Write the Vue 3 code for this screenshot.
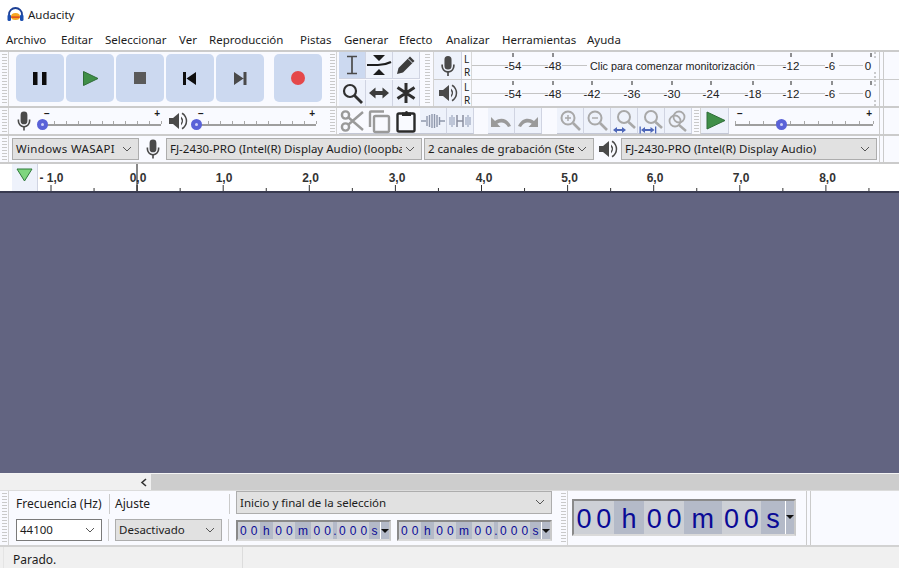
<script setup>
const menus = [
  { label: 'Archivo', w: 55 },
  { label: 'Editar', w: 44 },
  { label: 'Seleccionar', w: 74 },
  { label: 'Ver', w: 30 },
  { label: 'Reproducción', w: 91 },
  { label: 'Pistas', w: 44 },
  { label: 'Generar', w: 55 },
  { label: 'Efecto', w: 47 },
  { label: 'Analizar', w: 56 },
  { label: 'Herramientas', w: 85 },
  { label: 'Ayuda', w: 50 }
]

const mic = 'M10 2a3.4 3.4 0 0 1 3.4 3.4v6a3.4 3.4 0 0 1-6.8 0v-6A3.4 3.4 0 0 1 10 2zM3.6 10h1.6v1.6a4.8 4.8 0 0 0 9.6 0V10h1.6v1.6a6.4 6.4 0 0 1-5.6 6.3V21H9.2v-3.100A6.400 6.400 0 0 1 3.600 11.600z'
const speaker = 'M2 8h4l6-5v16l-6-5H2zM14 6.500a6 6 0 0 1 0 9v-2.400a3.600 3.600 0 0 0 0-4.200zM15.500 2.500a10 10 0 0 1 0 17l-.9-1.500a8 8 0 0 0 0-14z'

const meterTop = [
  { x: 41, t: '-54' }, { x: 81, t: '-48' }, { x: 319, t: '-12' }, { x: 358, tick: 360, t: '-6' }, { x: 396, tick: 399, t: '0' }
]
const meterBottom = [
  { x: 41, t: '-54' }, { x: 81, t: '-48' }, { x: 120, t: '-42' }, { x: 160, t: '-36' }, { x: 200, t: '-30' },
  { x: 239, t: '-24' }, { x: 281, t: '-18' }, { x: 319, t: '-12' }, { x: 358, tick: 360, t: '-6' }, { x: 396, tick: 399, t: '0' }
]

const rulerLabels = [
  { x: 13.500, t: '- 1,0' }, { x: 100, t: '0,0' }, { x: 186, t: '1,0' }, { x: 272.500, t: '2,0' },
  { x: 359, t: '3,0' }, { x: 446, t: '4,0' }, { x: 531.500, t: '5,0' }, { x: 617, t: '6,0' },
  { x: 703, t: '7,0' }, { x: 789.500, t: '8,0' }
]
const rulerTicks = Array.from({ length: 20 }, (_, i) => ({ x: 13 + i * 43.050, major: i % 2 === 0 }))

const sliderTicks = [0, 1, 2, 3, 4, 5, 6, 7, 8, 9, 10]

function clock(sizes) {
  const pair = (shade) => ['0', '0'].map((t) => ({ t, w: sizes.digit, shade }))
  return [
    ...pair(false),
    { t: 'h', w: sizes.h, shade: true },
    ...pair(false),
    { t: 'm', w: sizes.m, shade: true },
    ...pair(false)
  ]
}

const smallClock = [
  ...clock({ digit: 11, h: 14, m: 17 }),
  { t: '.', w: 4, shade: true },
  { t: '0', w: 11, shade: false },
  { t: '0', w: 11, shade: false },
  { t: '0', w: 11, shade: false },
  { t: 's', w: 11, shade: true }
]
const bigClock = [
  ...clock({ digit: 20, h: 31, m: 38 }),
  { t: 's', w: 24, shade: true }
]
</script>

<template>
  <div class="app">
    <header class="titlebar">
      <svg class="logo" width="17" height="15" viewBox="0 0 17 15">
        <path d="M2 9V7.500a6.500 6.500 0 0 1 13 0V9" fill="none" stroke="#1c3f94" stroke-width="1.800" />
        <rect x="0.500" y="7.500" width="3.500" height="6.500" rx="1.500" fill="#1c4fb0" />
        <rect x="13" y="7.500" width="3.500" height="6.500" rx="1.500" fill="#1c4fb0" />
        <ellipse cx="8.500" cy="9.500" rx="4.500" ry="3.600" fill="#f5a623" />
        <path d="M4.200 9.500h8.600v1.200H4.200z" fill="#d8321e" />
      </svg>
      <span>Audacity</span>
    </header>

    <nav class="menubar">
      <span v-for="m in menus" :key="m.label" :style="{ width: m.w + 'px' }">{{ m.label }}</span>
    </nav>

    <div class="dock-row row-a">
      <div class="grip"></div>
      <div class="transport">
        <button class="tp first">
          <svg width="48" height="48"><path d="M17 18h4.500v13H17zM26 18h4.500v13H26z" fill="#0c0c0c" /></svg>
        </button>
        <button class="tp">
          <svg width="48" height="48"><path d="M17.500 17.500 32 24.500 17.500 31.500z" fill="#3f8f48" stroke="#2f6d38" /></svg>
        </button>
        <button class="tp">
          <svg width="48" height="48"><rect x="18" y="18" width="12" height="12" fill="#5a5a5a" /></svg>
        </button>
        <button class="tp">
          <svg width="48" height="48"><path d="M17 18h3v13h-3zM30 18v13l-9.500-6.500z" fill="#0e0e0e" /></svg>
        </button>
        <button class="tp">
          <svg width="48" height="48"><path d="M18 18v13l9.500-6.500zM27.500 18h3v13h-3z" fill="#4a4a4a" /></svg>
        </button>
        <button class="tp record">
          <svg width="48" height="48"><circle cx="24" cy="24" r="7" fill="#e5484a" /></svg>
        </button>
      </div>
      <div class="grip"></div>
      <div class="tools">
        <button class="tool active">
          <svg width="26" height="26"><path d="M8 4.500h10M13 4.500v17M8 21.500h10" fill="none" stroke="#4a4a4a" stroke-width="1.700" /></svg>
        </button>
        <button class="tool">
          <svg width="26" height="26"><path d="M7 3h12l-6 6zM7 23h12l-6-6z" fill="#1d1d1d" /><path d="M1 13h11c5 0 9-1 13-3" fill="none" stroke="#1d1d1d" stroke-width="2.200" /></svg>
        </button>
        <button class="tool">
          <svg width="26" height="26"><path d="M4 22l1.500-6L17 4.500l4.500 4.500L10 20.500z" fill="#3c3c3c" /><path d="M15 6.500l4.500 4.500" stroke="#e9eefa" /></svg>
        </button>
        <button class="tool">
          <svg width="26" height="26"><circle cx="11" cy="11" r="6" fill="none" stroke="#303030" stroke-width="2.200" /><path d="M15.500 15.500 23 23" stroke="#303030" stroke-width="2.800" /></svg>
        </button>
        <button class="tool">
          <svg width="26" height="26"><path d="M3 13l6.500-5.500v3.500h7V7.500L23 13l-6.500 5.500V15h-7v3.500z" fill="#3c3c3c" /></svg>
        </button>
        <button class="tool">
          <svg width="26" height="26"><path d="M13 3v20M4.500 7.500l17 11M21.500 7.500l-17 11" stroke="#2e2e2e" stroke-width="3" /></svg>
        </button>
      </div>
      <div class="grip narrow"></div>
      <div class="meters">
        <div class="meter-line">
          <button class="meter-btn">
            <svg width="22" height="24" viewBox="0 0 20 23"><path :d="mic" fill="#4a4a4a" /></svg>
          </button>
          <div class="lr"><span>L</span><span>R</span></div>
          <svg class="scale" width="404" height="27">
            <line x1="0" y1="13.500" x2="404" y2="13.500" stroke="#c4c4c4" />
            <line x1="403" y1="0" x2="403" y2="27" stroke="#9a9a9a" stroke-dasharray="2 2" />
            <g v-for="m in meterTop" :key="m.t">
              <line :x1="m.tick ?? m.x" y1="1" :x2="m.tick ?? m.x" y2="5" stroke="#222" />
              <rect :x="m.x - 5" y="7" width="14" height="13" fill="#f9faff" />
              <text :x="m.x" y="17.500" text-anchor="middle">{{ m.t }}</text>
            </g>
            <rect x="115" y="6" width="170" height="15" fill="#f9faff" />
            <text class="hint" x="118" y="17.500">Clic para comenzar monitorización</text>
          </svg>
          <div class="dock-end"></div>
        </div>
        <div class="meter-line">
          <button class="meter-btn">
            <svg width="22" height="24" viewBox="0 0 22 22"><path :d="speaker" fill="#4a4a4a" /></svg>
          </button>
          <div class="lr"><span>L</span><span>R</span></div>
          <svg class="scale" width="404" height="26">
            <line x1="0" y1="13.500" x2="404" y2="13.500" stroke="#c4c4c4" />
            <line x1="403" y1="0" x2="403" y2="26" stroke="#9a9a9a" stroke-dasharray="2 2" />
            <g v-for="m in meterBottom" :key="m.t">
              <line :x1="m.tick ?? m.x" y1="1" :x2="m.tick ?? m.x" y2="5" stroke="#222" />
              <rect :x="m.x - 5" y="7" width="14" height="13" fill="#f9faff" />
              <text :x="m.x" y="17.500" text-anchor="middle">{{ m.t }}</text>
            </g>
          </svg>
          <div class="dock-end"></div>
        </div>
      </div>
    </div>

    <div class="dock-row row-b">
      <div class="grip"></div>
      <div class="mixer">
        <svg class="mix-icon" width="20" height="24" viewBox="0 0 20 23"><path :d="mic" fill="#4a4a4a" /></svg>
        <div class="slider mic-slider">
          <span class="minus">−</span><span class="plus">+</span>
          <i v-for="t in sliderTicks" :key="t" class="tick" :style="{ left: t * 10 + '%' }"></i>
          <b class="thumb" style="left: 0%"></b>
        </div>
        <svg class="mix-icon spk" width="22" height="24" viewBox="0 0 22 22"><path :d="speaker" fill="#4a4a4a" /></svg>
        <div class="slider spk-slider">
          <span class="minus">−</span><span class="plus">+</span>
          <i v-for="t in sliderTicks" :key="t" class="tick" :style="{ left: t * 10 + '%' }"></i>
          <b class="thumb" style="left: 0%"></b>
        </div>
      </div>
      <div class="grip"></div>
      <div class="edit">
        <button class="ed plain">
          <svg width="26" height="26"><g fill="none" stroke="#9a9a9a" stroke-width="2.400"><circle cx="6.500" cy="7" r="3.600" /><circle cx="6.500" cy="19" r="3.600" /><path d="M9.500 9.500 24 22M9.500 16.500 24 4" /></g></svg>
        </button>
        <button class="ed plain">
          <svg width="26" height="26"><g fill="none" stroke="#9a9a9a" stroke-width="2.400"><path d="M4 19V4.500a1 1 0 0 1 1-1h13" /><rect x="8" y="8" width="15" height="16" rx="1.500" /></g></svg>
        </button>
        <button class="ed plain">
          <svg width="26" height="26"><g fill="none" stroke="#2a2a2a" stroke-width="2.400"><rect x="4.500" y="5.500" width="17" height="18" rx="1.500" /></g><path d="M9 8V4.500h3a1.500 1.500 0 0 1 3 0h3V8z" fill="#2a2a2a" /></svg>
        </button>
        <button class="ed">
          <svg width="26" height="26"><g fill="none" stroke="#8f98ac" stroke-width="1.400"><path d="M1 13h5M20 13h5" /><path d="M7 8v10M9.500 7v12M12 6v14M14.500 6v14M17 7v12M19.500 9v8" /></g></svg>
        </button>
        <button class="ed">
          <svg width="26" height="26"><g fill="none" stroke="#a4adc4" stroke-width="1.300"><path d="M3 9v8M5 7v12M7 9v8M19 9v8M21 7v12M23 9v8" /></g><path d="M10 7v12M16 7v12M10 13h6" fill="none" stroke="#8a8fa0" stroke-width="1.500" /></svg>
        </button>
        <div class="ed-space s41"></div>
        <button class="ed">
          <svg width="26" height="26"><path d="M3 9v10h9.500l-3.200-3.200c3.600-2.300 8-1.300 10.700 3.200l3-.9C19.800 10.800 13 8.700 7 13z" fill="#9a9a9a" /></svg>
        </button>
        <button class="ed">
          <svg width="26" height="26"><path d="M23 9v10h-9.500l3.200-3.200c-3.600-2.300-8-1.300-10.700 3.200l-3-.9C6.200 10.800 13 8.700 19 13z" fill="#9a9a9a" /></svg>
        </button>
        <div class="ed-space s16"></div>
        <button class="ed">
          <svg width="26" height="26"><g fill="none" stroke="#a8a8a8" stroke-width="2"><circle cx="11" cy="10" r="6.500" /><path d="M16 15 23 22" stroke-width="2.600" /><path d="M8 10h6M11 7v6" stroke-width="1.400" /></g></svg>
        </button>
        <button class="ed">
          <svg width="26" height="26"><g fill="none" stroke="#a8a8a8" stroke-width="2"><circle cx="11" cy="10" r="6.500" /><path d="M16 15 23 22" stroke-width="2.600" /><path d="M8 10h6" stroke-width="1.400" /></g></svg>
        </button>
        <button class="ed">
          <svg width="26" height="26"><g fill="none" stroke="#a8a8a8" stroke-width="2"><circle cx="13" cy="9" r="6" /><path d="M17.500 14 24 20" stroke-width="2.600" /></g><path d="M2 22l4-3v2h5v-2l4 3-4 3v-2H6v2z" fill="#4d66b8" /></svg>
        </button>
        <button class="ed">
          <svg width="26" height="26"><g fill="none" stroke="#a8a8a8" stroke-width="2"><circle cx="13" cy="9" r="6" /><path d="M17.500 14 24 20" stroke-width="2.600" /></g><path d="M1.500 18.500h1.300v7H1.500zM17 18.500h1.300v7H17zM3 22l4-3v2h5.500v-2l4 3-4 3v-2H7v2z" fill="#4d66b8" /></svg>
        </button>
        <button class="ed">
          <svg width="26" height="26"><g fill="none" stroke="#a8a8a8" stroke-width="1.800"><circle cx="14" cy="9" r="5.500" /><circle cx="10" cy="13" r="5.500" /><path d="M14 17 21 23" stroke-width="2.400" /></g></svg>
        </button>
      </div>
      <div class="grip"></div>
      <button class="play-at">
        <svg width="28" height="25"><path d="M6 4l18 8.500L6 21z" fill="#3f8f48" stroke="#2f6d38" /></svg>
      </button>
      <div class="slider speed-slider">
        <span class="minus">−</span><span class="plus">+</span>
        <i v-for="t in sliderTicks" :key="t" class="tick" :style="{ left: t * 10 + '%' }"></i>
        <b class="thumb" style="left: 33%"></b>
      </div>
      <div class="dock-end"></div>
    </div>

    <div class="dock-row row-c">
      <div class="grip"></div>
      <div class="combo c-host">Windows WASAPI
        <svg class="chev" width="10" height="6"><path d="M1 1l4 4 4-4" fill="none" stroke="#555" /></svg>
      </div>
      <svg class="dev-icon" width="20" height="24" viewBox="0 0 20 23"><path :d="mic" fill="#4a4a4a" /></svg>
      <div class="combo c-rec">FJ-2430-PRO (Intel(R) Display Audio) (loopba
        <svg class="chev" width="10" height="6"><path d="M1 1l4 4 4-4" fill="none" stroke="#555" /></svg>
      </div>
      <div class="combo c-chan">2 canales de grabación (Ster
        <svg class="chev" width="10" height="6"><path d="M1 1l4 4 4-4" fill="none" stroke="#555" /></svg>
      </div>
      <svg class="dev-icon spk" width="22" height="24" viewBox="0 0 22 22"><path :d="speaker" fill="#4a4a4a" /></svg>
      <div class="combo c-play">FJ-2430-PRO (Intel(R) Display Audio)
        <svg class="chev" width="10" height="6"><path d="M1 1l4 4 4-4" fill="none" stroke="#555" /></svg>
      </div>
      <div class="dock-end"></div>
    </div>

    <div class="ruler">
      <div class="ruler-side">
        <div class="pin">
          <svg width="17" height="14"><path d="M1 1h15l-7.500 12z" fill="#7ed67e" stroke="#2f7a3a" /></svg>
        </div>
      </div>
      <svg class="ruler-scale" width="861" height="27">
        <line v-for="(t, i) in rulerTicks" :key="i" :x1="t.x" :x2="t.x" :y1="t.major ? 21 : 24" y2="27" stroke="#333" />
        <text v-for="l in rulerLabels" :key="l.t" :x="l.x" y="18" text-anchor="middle">{{ l.t }}</text>
        <line x1="99" x2="99" y1="0" y2="27" stroke="#111" />
      </svg>
    </div>

    <main class="tracks"></main>

    <div class="hscroll">
      <div class="scroll-btn">
        <svg width="8" height="9"><path d="M6 1 2 4.500 6 8" fill="none" stroke="#333" stroke-width="1.600" /></svg>
      </div>
      <div class="scroll-track"></div>
    </div>

    <div class="bottom">
      <div class="grip"></div>
      <div class="selbar">
        <label class="rate-label">Frecuencia (Hz)</label>
        <label class="snap-label">Ajuste</label>
        <div class="combo sel-mode">Inicio y final de la selección
          <svg class="chev" width="10" height="6"><path d="M1 1l4 4 4-4" fill="none" stroke="#555" /></svg>
        </div>
        <div class="rate-cell">
          <div class="combo rate">44100
            <svg class="chev" width="10" height="6"><path d="M1 1l4 4 4-4" fill="none" stroke="#555" /></svg>
          </div>
        </div>
        <div class="snap-cell">
          <div class="combo snap">Desactivado
            <svg class="chev" width="10" height="6"><path d="M1 1l4 4 4-4" fill="none" stroke="#555" /></svg>
          </div>
        </div>
        <div class="clocks">
          <div v-for="n in 2" :key="n" class="clock small">
            <span v-for="(c, i) in smallClock" :key="i" :class="{ shade: c.shade }" :style="{ width: c.w + 'px' }">{{ c.t }}</span>
            <em class="clock-arrow"></em>
          </div>
        </div>
      </div>
      <div class="grip"></div>
      <div class="big-wrap">
        <div class="clock big">
          <span v-for="(c, i) in bigClock" :key="i" :class="{ shade: c.shade }" :style="{ width: c.w + 'px' }">{{ c.t }}</span>
          <em class="clock-arrow"></em>
        </div>
      </div>
      <div class="dock-end bottom-end"></div>
    </div>

    <footer class="status">
      <span class="status-main">Parado.</span>
      <span class="status-rest"></span>
    </footer>
  </div>
</template>

<style>
html, body {
  margin: 0;
  background: #fff;
}
</style>

<style scoped>
.app {
  width: 899px;
  height: 568px;
  overflow: hidden;
  display: flex;
  flex-direction: column;
  font-family: "Noto Sans", "Open Sans", sans-serif;
  font-size: 11.500px;
  color: #1c1c1c;
}

button {
  padding: 0;
  border: none;
  font: inherit;
  display: block;
}

svg {
  display: block;
}

.titlebar {
  height: 30px;
  display: flex;
  align-items: center;
  gap: 4px;
  padding: 0 0 1px 7px;
  box-sizing: border-box;
  font-size: 11.500px;
  background: #fff;
}

.menubar {
  height: 20px;
  display: flex;
  align-items: center;
  padding: 0 0 2px 6px;
  box-sizing: border-box;
  background: #fff;
}

.menubar span {
  white-space: nowrap;
}

.dock-row {
  display: flex;
  background: #f9faff;
  border-top: 2px solid #cbcbcb;
  box-sizing: border-box;
}

.row-a { height: 56px; }
.row-b { height: 28px; }
.row-c { height: 28px; align-items: center; }

.row-c .grip {
  align-self: stretch;
}

.grip {
  width: 5px;
  flex: none;
  margin: 2px;
  background: repeating-linear-gradient(to bottom, #c9c9c9 0 1px, #f9faff 1px 3px);
  position: relative;
}

.grip::after {
  content: "";
  position: absolute;
  top: -2px;
  bottom: -2px;
  right: -2px;
  width: 1px;
  background: #d4d4d4;
}

.grip.narrow {
  margin-left: 5px;
  margin-right: 4px;
}

.grip.narrow::after {
  right: -4px;
}

.transport {
  width: 319px;
  flex: none;
  display: flex;
  gap: 2px;
  padding: 2px 0 0 7px;
  box-sizing: border-box;
}

.tp {
  width: 48px;
  height: 48px;
  background: #ccd9f0;
  border-radius: 5px;
}

.tp.record {
  margin-left: 8px;
}

.tools {
  display: grid;
  grid-template-columns: repeat(3, 27px);
  grid-auto-rows: 27px;
  width: 81px;
  flex: none;
  padding-left: 2px;
  row-gap: 1px;
}

.tool {
  width: 26px;
  height: 26px;
  background: #eef2fb;
  border-right: 1px solid #d0d4e2;
  border-bottom: 1px solid #d0d4e2;
  box-sizing: content-box;
}

.tool.active {
  background: #ccd9f0;
}

.meters {
  flex: 1;
  display: flex;
  flex-direction: column;
}

.meter-line {
  height: 27px;
  display: flex;
  align-items: stretch;
}

.meter-line + .meter-line {
  height: 27px;
  border-top: 1px solid #cbcbcb;
}

.meter-btn {
  width: 28px;
  flex: none;
  background: #eef2fb;
  border-right: 1px solid #d0d4e2;
  display: flex;
  align-items: center;
  justify-content: center;
}

.lr {
  width: 10px;
  flex: none;
  display: flex;
  flex-direction: column;
  justify-content: space-around;
  font-size: 10px;
  line-height: 12px;
  padding-left: 2px;
  box-sizing: border-box;
  border-right: 1px solid #d8d8d8;
}

.scale {
  flex: none;
  overflow: hidden;
}

.scale text {
  font-family: "Liberation Sans", Arial, sans-serif;
  font-size: 11.600px;
  fill: #222;
}

.scale text.hint {
  font-size: 10.750px;
}

.dock-end {
  flex: 1;
  margin-left: 3px;
  align-self: stretch;
  border-left: 1px solid #cbcbcb;
  background: linear-gradient(#cbcbcb, #cbcbcb) 3px 0 / 1px 100% no-repeat;
}

.row-b .dock-end { margin-left: 6px; }
.row-c .dock-end { margin-left: 2px; }

.mixer {
  width: 319px;
  flex: none;
  display: flex;
  align-items: center;
  padding-left: 5px;
  box-sizing: border-box;
}

.mix-icon {
  flex: none;
}

.mix-icon.spk {
  margin-left: 6px;
}

.slider {
  position: relative;
  height: 26px;
  flex: none;
  background: linear-gradient(#9e9e9e, #9e9e9e) left 0 top 16px / 100% 2px no-repeat;
}

.mic-slider { width: 119px; margin-left: 8px; }
.spk-slider { width: 120px; margin-left: 7px; }
.speed-slider { width: 138px; margin-left: 6px; }

.minus, .plus {
  position: absolute;
  top: 1px;
  font-family: "Liberation Sans", sans-serif;
  font-size: 10px;
  line-height: 10px;
  font-weight: 700;
}

.minus { left: 2px; }
.plus { right: 1px; }

.tick {
  position: absolute;
  top: 13px;
  width: 1px;
  height: 3px;
  background: #a8a8a8;
}

.thumb {
  position: absolute;
  top: 11px;
  width: 11px;
  height: 11px;
  margin-left: -5px;
  box-sizing: border-box;
  border-radius: 50%;
  background: #cfd2f7;
  border: 4px solid #5a62d8;
}

.edit {
  width: 355px;
  flex: none;
  display: flex;
  padding-left: 2px;
  box-sizing: border-box;
}

.ed {
  width: 26px;
  height: 25px;
  flex: none;
  background: #eef2fb;
  border-right: 1px solid #d0d4e2;
  border-bottom: 1px solid #c4c8d6;
  box-sizing: content-box;
}

.ed.plain {
  background: transparent;
  border-right: none;
  width: 27px;
}

.ed-space.s41 { width: 14px; flex: none; }
.ed-space.s16 { width: 15px; flex: none; }

.play-at {
  width: 28px;
  height: 26px;
  flex: none;
  background: #eef2fb;
  border-right: 1px solid #d0d4e2;
  border-bottom: 1px solid #c4c8d6;
  overflow: hidden;
}

.combo {
  position: relative;
  box-sizing: border-box;
  height: 22px;
  line-height: 20px;
  padding: 0 22px 0 3px;
  background: #e1e1e1;
  border: 1px solid #adadad;
  white-space: nowrap;
  overflow: hidden;
  flex: none;
}

.combo::after {
  content: "";
  position: absolute;
  top: 0;
  bottom: 0;
  right: 0;
  width: 19px;
  background: inherit;
}

.chev {
  position: absolute;
  right: 6px;
  top: 7px;
  z-index: 1;
}

.c-host { width: 127px; margin-left: 3px; letter-spacing: .35px; }
.dev-icon { flex: none; margin: 0 3px 0 4px; }
.c-rec { width: 256px; }
.c-chan { width: 170px; margin-left: 2px; }
.dev-icon.spk { margin: 0 2px 0 3px; }
.c-play { width: 256px; }

.ruler {
  height: 31px;
  flex: none;
  display: flex;
  background: #fff;
  border-top: 2px solid #cbcbcb;
  border-bottom: 2px solid #383a50;
  box-sizing: border-box;
}

.ruler-side {
  width: 38px;
  flex: none;
  box-sizing: border-box;
  padding-left: 12px;
}

.pin {
  height: 100%;
  background: #eef2fb;
  border-right: 1px solid #d0d4e2;
  display: flex;
  justify-content: center;
  padding-top: 4px;
  box-sizing: border-box;
}

.ruler-scale {
  flex: none;
}

.ruler-scale text {
  font-family: "Liberation Sans", Arial, sans-serif;
  font-size: 12px;
  font-weight: 700;
  fill: #333;
}

.tracks {
  flex: 1;
  min-height: 0;
  background: #626481;
}

.hscroll {
  height: 17px;
  flex: none;
  display: flex;
  border-top: 1px solid #f4f4f4;
  box-sizing: border-box;
}

.scroll-btn {
  width: 151px;
  flex: none;
  background: #f0f0f0;
  display: flex;
  align-items: center;
  justify-content: flex-end;
  padding-right: 3px;
  box-sizing: border-box;
}

.scroll-track {
  flex: 1;
  background: #cdcdcd;
}

.bottom {
  height: 57px;
  flex: none;
  display: flex;
  background: #f9faff;
  border-top: 1px solid #dcdcdc;
  border-bottom: 2px solid #d2d2d2;
  box-sizing: border-box;
}

.selbar {
  width: 550px;
  flex: none;
  display: grid;
  grid-template-columns: 99px 121px 1fr;
  grid-template-rows: 23px 29px;
  padding-left: 7px;
  box-sizing: border-box;
}

.rate-label, .snap-label {
  font-size: 12px;
  align-self: end;
  line-height: 20px;
  border-right: 1px solid #cbcbcb;
}

.rate-label {
  width: 93px;
}

.snap-label {
  width: 114px;
}

.sel-mode {
  width: 316px;
  height: 23px;
  line-height: 22px;
}

.rate-cell,
.snap-cell {
  margin-top: 5px;
  height: 22px;
  border-right: 1px solid #cbcbcb;
  box-sizing: border-box;
}

.rate-cell {
  width: 93px;
}

.snap-cell {
  width: 114px;
}

.rate {
  width: 86px;
  background: #fff;
  border-color: #7a7a7a;
}

.snap {
  width: 107px;
}

.clocks {
  display: flex;
  gap: 6px;
  margin-top: 6px;
  align-items: flex-start;
}

.clock {
  display: flex;
  position: relative;
  box-sizing: border-box;
  background: #c9c9c9;
  color: #0a0a96;
  font-family: "Liberation Sans", Arial, sans-serif;
  border: 2px solid #8a8a8a;
  border-right-color: #c9c9c9;
  border-bottom-color: #dadada;
}

.clock span {
  display: block;
  text-align: center;
  background: #cdd0d6;
}

.clock span.shade {
  background: #b4bac8;
}

.clock.small {
  height: 21px;
  font-size: 12px;
  line-height: 19px;
  width: 155px;
  padding-right: 9px;
}

.clock.big {
  height: 37px;
  font-size: 27px;
  line-height: 36px;
  width: 224px;
  padding-right: 9px;
}

.clock.big span {
  height: 33px;
  overflow: hidden;
}

.clock-arrow {
  position: absolute;
  right: 0;
  top: 0;
  bottom: 0;
  width: 8px;
  background: #b4bac8;
  border-left: 1px solid #fff;
}

.clock-arrow::after {
  content: "";
  position: absolute;
  left: 0;
  top: 7px;
  border: 4px solid transparent;
  border-top: 4px solid #111;
  border-bottom: none;
}

.big-wrap {
  width: 238px;
  flex: none;
  padding: 8px 0 0 4px;
  box-sizing: border-box;
}

.big-wrap .clock-arrow::after {
  top: 14px;
}

.bottom-end {
  margin-left: 0;
}

.status {
  height: 21px;
  flex: none;
  display: flex;
  background: #f0f0f0;
  font-size: 12px;
  line-height: 26px;
}

.status-main {
  width: 240px;
  flex: none;
  padding-left: 9px;
  margin-left: 3px;
  box-sizing: border-box;
  border-right: 1px solid #dcdcdc;
  border-left: 1px solid #e4e4e4;
}
</style>
